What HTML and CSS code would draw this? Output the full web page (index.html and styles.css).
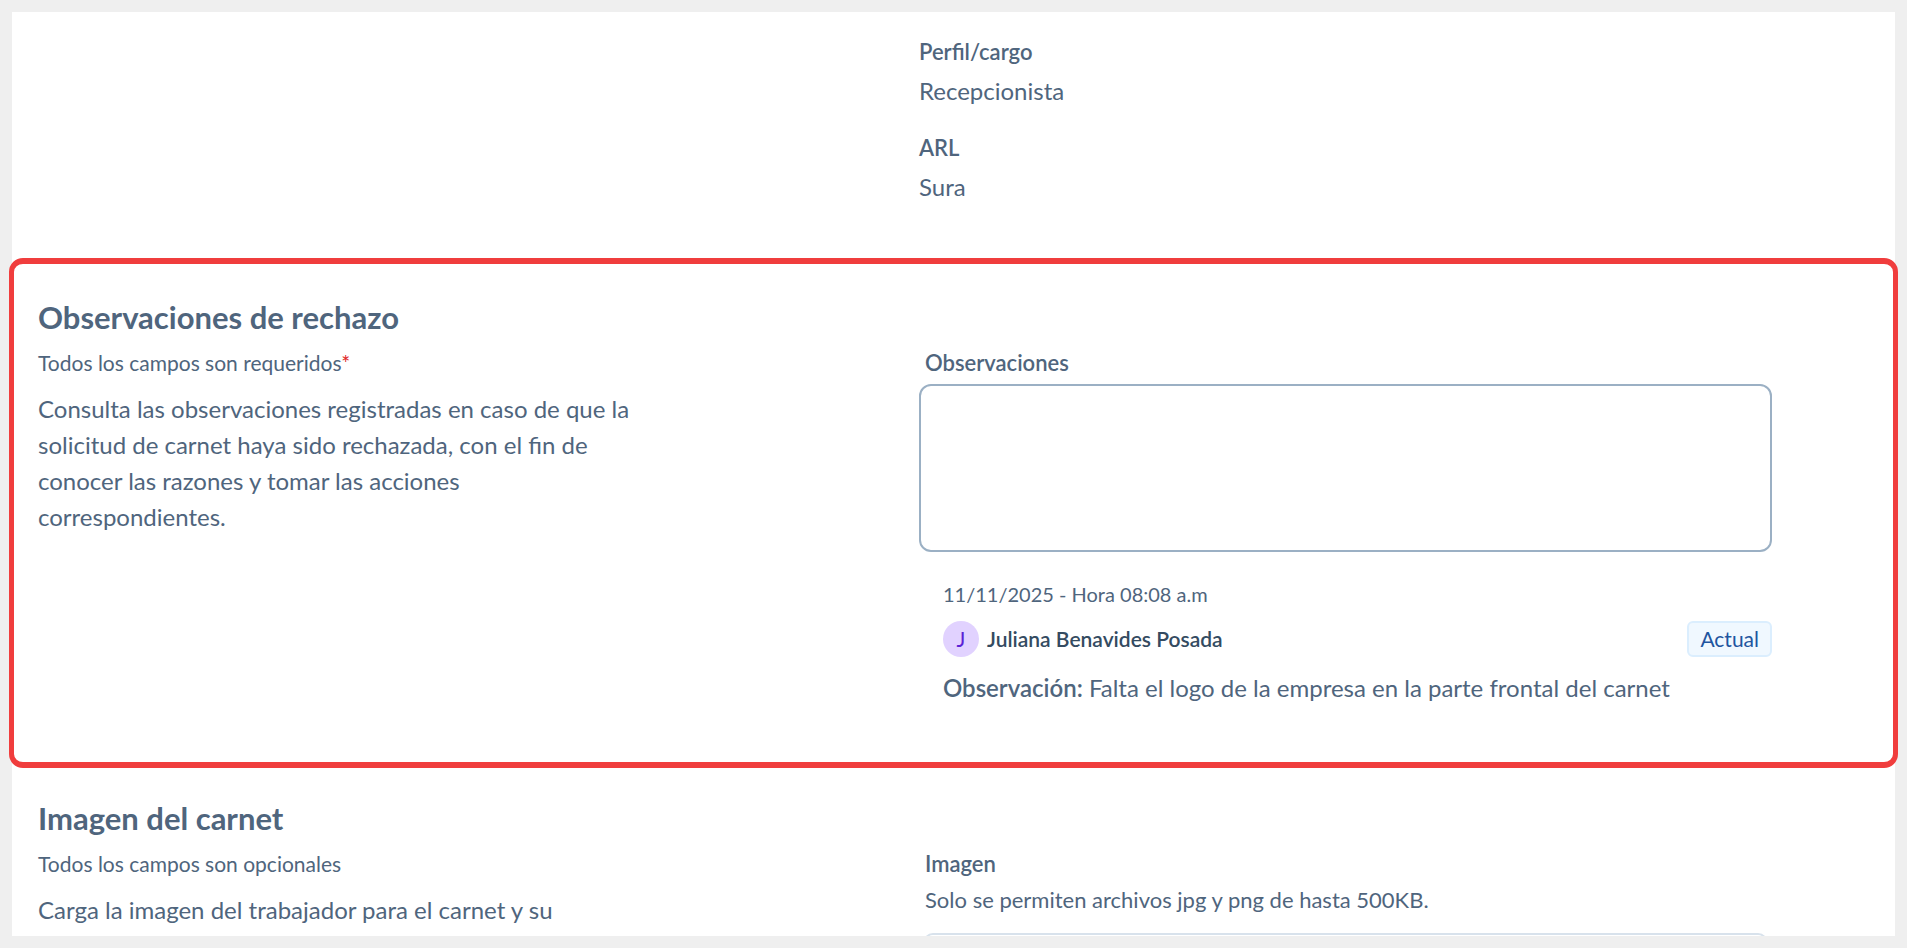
FILE: index.html
```
<!DOCTYPE html>
<html lang="es">
<head>
<meta charset="UTF-8" />
<meta name="viewport" content="width=device-width, initial-scale=1" />
<title>Solicitud de carnet</title>
<link rel="stylesheet" href="styles.css">
</head>
<body>

<main class="panel">

  <section class="section datos">
    <dl class="col-right">
      <div class="dato">
        <dt>Perfil/cargo</dt>
        <dd>Recepcionista</dd>
      </div>
      <div class="dato">
        <dt>ARL</dt>
        <dd>Sura</dd>
      </div>
    </dl>
  </section>

  <section class="section rechazo">
    <h2>Observaciones de rechazo</h2>
    <div class="col-left">
      <p class="nota">Todos los campos son requeridos<span class="req">*</span></p>
      <p class="descripcion">Consulta las observaciones registradas en caso de que la solicitud de carnet haya sido rechazada, con el fin de conocer las razones y tomar las acciones correspondientes.</p>
    </div>
    <div class="col-right">
      <label class="campo" for="observaciones">Observaciones</label>
      <textarea id="observaciones" class="texto"></textarea>

      <article class="historial">
        <time class="fecha" datetime="2025-11-11T08:08">11/11/2025 - Hora 08:08 a.m</time>
        <div class="autor">
          <span class="avatar">J</span>
          <span class="nombre">Juliana Benavides Posada</span>
          <span class="tag">Actual</span>
        </div>
        <p class="comentario"><strong>Observación:</strong> Falta el logo de la empresa en la parte frontal del carnet</p>
      </article>
    </div>
  </section>

  <section class="section imagen">
    <h2>Imagen del carnet</h2>
    <div class="col-left">
      <p class="nota">Todos los campos son opcionales</p>
      <p class="descripcion">Carga la imagen del trabajador para el carnet y su</p>
    </div>
    <div class="col-right">
      <label class="campo" for="archivo">Imagen</label>
      <p class="ayuda">Solo se permiten archivos jpg y png de hasta 500KB.</p>
      <div class="carga">
        <input type="file" id="archivo" accept=".jpg,.png">
      </div>
    </div>
  </section>

</main>

</body>
</html>
```
FILE: styles.css
```
* { box-sizing: border-box; }
body {
  margin: 0;
  padding: 12px;
  background: #efefef;
  color: #4f657d;
  font-family: Lato, "Open Sans", sans-serif;
  font-size: 24px;
  line-height: 36px;
}
h2, p, dl, dd { margin: 0; }

.panel {
  height: calc(100vh - 24px);
  background: #fff;
  overflow-x: visible;
  overflow-y: clip;
}
.section {
  display: grid;
  grid-template-columns: 1fr 1fr;
  column-gap: 28px;
  padding: 0 123px 0 26px;
}
.section h2 {
  grid-column: 1 / -1;
  margin-bottom: 10px;
  font-size: 31px;
  line-height: 40px;
  font-weight: 700;
}
.col-left { max-width: 604px; }
.col-right { grid-column: 2; }

/* Datos del trabajador */
.datos {
  padding-top: 24px;
  padding-bottom: 53px;
}
.dato + .dato { margin-top: 23px; }
.dato dt {
  margin-bottom: 5px;
  font-size: 22px;
  line-height: 32px;
  font-weight: 600;
}

/* Observaciones */
.rechazo {
  margin: 0 -3px;
  padding: 33px 121px 56px 24px;
  border: 6px solid #f03d3d;
  border-width: 6px 5px;
  border-radius: 14px;
}
.nota {
  font-size: 21px;
  line-height: 32px;
}
.req { color: #e02424; }
.descripcion { margin-top: 12px; }
.campo {
  display: block;
  padding-left: 6px;
  font-size: 22px;
  line-height: 32px;
  font-weight: 600;
}
.texto {
  display: block;
  width: 100%;
  height: 168px;
  margin-top: 5px;
  padding: 12px;
  border: 2px solid #9bb0c4;
  border-radius: 12px;
  background: #fff;
  color: inherit;
  font: inherit;
  resize: none;
}
.historial {
  margin-top: 26px;
  padding-left: 24px;
}
.fecha {
  display: block;
  font-size: 20px;
  line-height: 32px;
}
.autor {
  display: flex;
  align-items: center;
  gap: 8px;
  margin: 11px 0 13px;
  font-size: 21px;
}
.avatar {
  width: 36px;
  height: 36px;
  border-radius: 50%;
  background: #e1d2ff;
  color: #5b21d6;
  text-align: center;
}
.nombre {
  color: #344b61;
  font-weight: 600;
}
.tag {
  margin-left: auto;
  padding: 0 11px;
  border: 2px solid #dbeefe;
  border-radius: 6px;
  background: #f0f8ff;
  color: #1f559f;
  line-height: 32px;
}
.comentario strong { font-weight: 600; }

/* Imagen */
.imagen { padding-top: 30px; }
.ayuda {
  margin-top: 4px;
  padding-left: 6px;
  font-size: 22px;
  line-height: 32px;
}
.carga {
  margin: 17px 4px 0;
  padding: 24px;
  border: 2px solid #d8e2ec;
  border-radius: 10px;
}
```
